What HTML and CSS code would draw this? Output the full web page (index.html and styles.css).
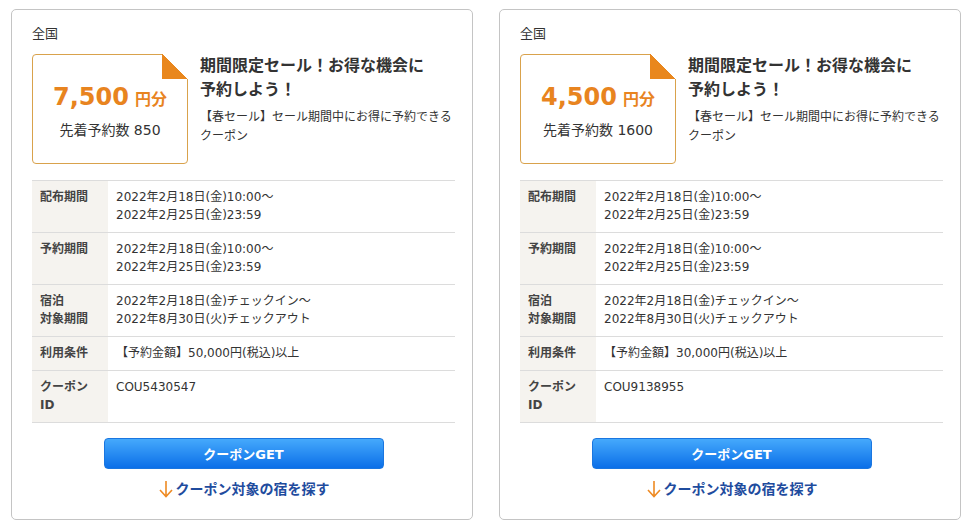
FILE: index.html
```html
<!DOCTYPE html>
<html lang="ja">
<head>
<meta charset="utf-8">
<title>クーポン</title>
<link rel="stylesheet" href="styles.css">
</head>
<body>
<div class="page">
  <div class="card">
    <div class="area">全国</div>
    <div class="head">
      <div class="ticket">
        <div class="amount"><span class="num">7,500</span><span class="unit">円分</span></div>
        <div class="count">先着予約数 850</div>
      </div>
      <div class="info">
        <h2 class="title">期間限定セール！お得な機会に<br>予約しよう！</h2>
        <p class="desc">【春セール】セール期間中にお得に予約できるクーポン</p>
      </div>
    </div>
    <table class="details">
      <tr><th>配布期間</th><td>2022年2月18日(金)10:00～<br>2022年2月25日(金)23:59</td></tr>
      <tr><th>予約期間</th><td>2022年2月18日(金)10:00～<br>2022年2月25日(金)23:59</td></tr>
      <tr><th>宿泊<br>対象期間</th><td>2022年2月18日(金)チェックイン～<br>2022年8月30日(火)チェックアウト</td></tr>
      <tr><th>利用条件</th><td>【予約金額】50,000円(税込)以上</td></tr>
      <tr><th>クーポン<br>ID</th><td>COU5430547</td></tr>
    </table>
    <div class="actions">
      <a class="get-btn" href="#">クーポンGET</a>
      <a class="search-link" href="#"><svg class="arrow" width="16" height="18" viewBox="0 0 16 18"><path d="M8 1 V16 M2 10 L8 16.5 L14 10" fill="none" stroke="#ee8a22" stroke-width="1.6"/></svg>クーポン対象の宿を探す</a>
    </div>
  </div>
  <div class="card">
    <div class="area">全国</div>
    <div class="head">
      <div class="ticket">
        <div class="amount"><span class="num">4,500</span><span class="unit">円分</span></div>
        <div class="count">先着予約数 1600</div>
      </div>
      <div class="info">
        <h2 class="title">期間限定セール！お得な機会に<br>予約しよう！</h2>
        <p class="desc">【春セール】セール期間中にお得に予約できるクーポン</p>
      </div>
    </div>
    <table class="details">
      <tr><th>配布期間</th><td>2022年2月18日(金)10:00～<br>2022年2月25日(金)23:59</td></tr>
      <tr><th>予約期間</th><td>2022年2月18日(金)10:00～<br>2022年2月25日(金)23:59</td></tr>
      <tr><th>宿泊<br>対象期間</th><td>2022年2月18日(金)チェックイン～<br>2022年8月30日(火)チェックアウト</td></tr>
      <tr><th>利用条件</th><td>【予約金額】30,000円(税込)以上</td></tr>
      <tr><th>クーポン<br>ID</th><td>COU9138955</td></tr>
    </table>
    <div class="actions">
      <a class="get-btn" href="#">クーポンGET</a>
      <a class="search-link" href="#"><svg class="arrow" width="16" height="18" viewBox="0 0 16 18"><path d="M8 1 V16 M2 10 L8 16.5 L14 10" fill="none" stroke="#ee8a22" stroke-width="1.6"/></svg>クーポン対象の宿を探す</a>
    </div>
  </div>
</div>
</body>
</html>
```

FILE: styles.css
```css
* { box-sizing: border-box; }
html, body { margin: 0; background: #fff; }
body {
  font-family: "DejaVu Sans", "Noto Sans CJK JP", sans-serif;
  color: #333;
  font-size: 12px;
}
.page {
  display: flex;
  gap: 26px;
  padding: 9px 0 0 11px;
}
.card {
  width: 462px;
  border: 1px solid #c4c4c4;
  border-radius: 5px;
  padding: 14px 17px 20px 20px;
  display: flex;
  flex-direction: column;
}
.area {
  font-size: 13px;
  line-height: 20px;
  margin-bottom: 10px;
}
.head {
  display: flex;
  gap: 12px;
}
.ticket {
  position: relative;
  flex: 0 0 156px;
  height: 110px;
  border: 1px solid #d9a24c;
  border-radius: 4px;
  display: flex;
  flex-direction: column;
  align-items: center;
  justify-content: center;
  gap: 5px;
  padding-top: 4px;
}
.ticket::after {
  content: "";
  position: absolute;
  top: -1px;
  right: -1px;
  width: 26px;
  height: 25px;
  background: linear-gradient(to bottom left, #fff 50%, #e9871d 50%);
}
.amount {
  color: #e8841f;
  font-weight: bold;
  line-height: 28px;
  white-space: nowrap;
}
.num { font-size: 24px; }
.unit { font-size: 16px; margin-left: 6px; }
.count {
  font-size: 14px;
  line-height: 20px;
  color: #333;
}
.info { flex: 1; min-width: 0; }
.title {
  margin: 0;
  font-size: 16px;
  line-height: 24px;
  font-weight: bold;
  color: #333;
}
.desc {
  margin: 6px 0 0;
  font-size: 12px;
  line-height: 19px;
  color: #333;
}
.details {
  margin-top: 16px;
  width: 100%;
  border-collapse: collapse;
  border-top: 1px solid #dcdcdc;
}
.details th, .details td {
  border-bottom: 1px solid #dcdcdc;
  vertical-align: top;
  text-align: left;
  padding: 7px 8px 8px;
  line-height: 18px;
  font-size: 12px;
}
.details th {
  width: 76px;
  background: #f5f3ef;
  font-weight: bold;
  color: #444;
}
.details td { color: #333; }
.actions {
  display: flex;
  flex-direction: column;
  align-items: center;
  margin-top: 15px;
}
.get-btn {
  width: 280px;
  height: 31px;
  display: flex;
  align-items: center;
  justify-content: center;
  border-radius: 4px;
  background: linear-gradient(#45a9fc, #0b6fe8);
  border: 1px solid #1a76e0;
  color: #fff;
  font-weight: bold;
  font-size: 13px;
  text-decoration: none;
}
.search-link {
  margin-top: 10px;
  display: flex;
  align-items: center;
  gap: 2px;
  color: #1f4c9e;
  font-weight: bold;
  font-size: 14px;
  line-height: 20px;
  text-decoration: none;
}
.arrow { display: block; }
```
